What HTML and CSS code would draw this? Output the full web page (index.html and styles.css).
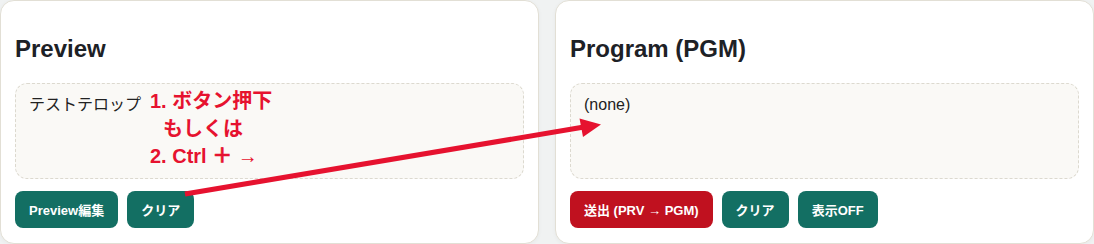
FILE: index.html
```html
<!DOCTYPE html>
<html lang="ja">
<head>
  <meta charset="UTF-8" />
  <meta name="viewport" content="width=device-width, initial-scale=1.0" />
  <title>Telop Switcher</title>
  <link rel="stylesheet" href="styles.css">
</head>
<body>
  <div class="switcher">
    <div class="panel">
      <h2>Preview</h2>
      <div class="screen">テストテロップ</div>
      <div class="actions">
        <button class="btn">Preview編集</button>
        <button class="btn">クリア</button>
      </div>
    </div>

    <div class="panel">
      <h2>Program (PGM)</h2>
      <div class="screen">(none)</div>
      <div class="actions">
        <button class="btn btn-take">送出 (PRV → PGM)</button>
        <button class="btn">クリア</button>
        <button class="btn">表示OFF</button>
      </div>
    </div>

    <!-- annotation overlay -->
    <div class="note">
      <div>1. ボタン押下</div>
      <div class="note-or">もしくは</div>
      <div>2. Ctrl <span class="note-plus">＋</span> →</div>
    </div>
    <svg class="note-arrow" width="1094" height="244" viewBox="0 0 1094 244">
      <line x1="185" y1="194" x2="584" y2="127" stroke="#e6122f" stroke-width="5" />
      <polygon points="601,124.5 579.5,118.5 583,137" fill="#e6122f" />
    </svg>
  </div>
</body>
</html>
```

FILE: styles.css
```css
* {
  box-sizing: border-box;
}
body {
  margin: 0;
  background: #f0f2f2;
  color: #222;
  font-family: 'Liberation Sans', 'Noto Sans CJK JP', sans-serif;
}
.switcher {
  position: relative;
  display: grid;
  grid-template-columns: 1fr 1fr;
  gap: 16px;
  width: 1094px;
}
.panel {
  background: #fff;
  border: 1px solid #e2dfd5;
  border-radius: 14px;
  padding: 15px 14px 15px;
  box-shadow: 0 1px 4px rgba(0, 0, 0, 0.04);
}
.panel h2 {
  margin: 19px 0 20px;
  font-size: 24px;
  color: #1d2126;
}
.screen {
  min-height: 96px;
  padding: 12px 13px;
  background: #faf9f6;
  border: 1px dashed #dcd9cf;
  border-radius: 12px;
  font-size: 16px;
  line-height: 18px;
}
.actions {
  display: flex;
  gap: 9px;
  margin-top: 12px;
}
.btn {
  height: 37px;
  padding: 0 14px;
  border: none;
  border-radius: 8px;
  background: #136f63;
  color: #fff;
  font-family: inherit;
  font-size: 13px;
  font-weight: bold;
  cursor: pointer;
}
.btn-take {
  background: #c0111f;
}
.note {
  position: absolute;
  left: 150px;
  top: 88px;
  color: #e6122f;
  font-size: 20px;
  font-weight: bold;
  line-height: 27.5px;
}
.note-or {
  padding-left: 13px;
}
.note-plus {
  -webkit-text-stroke: 0.6px #e6122f;
}
.note-arrow {
  position: absolute;
  top: 0;
  left: 0;
  pointer-events: none;
}
```
